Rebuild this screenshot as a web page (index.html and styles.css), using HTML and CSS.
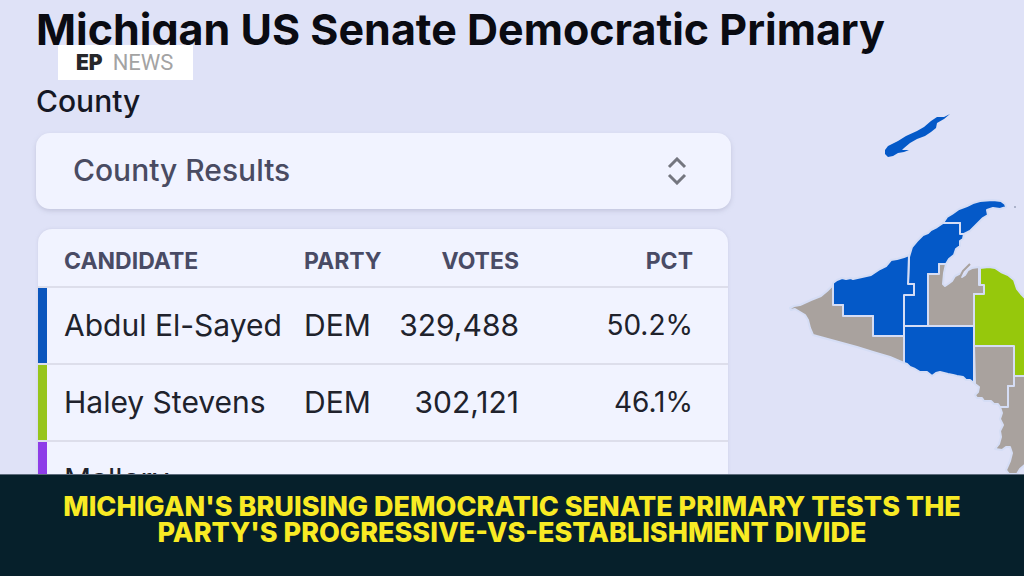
FILE: index.html
```html
<!DOCTYPE html>
<html lang="en">
<head>
<meta charset="utf-8">
<meta name="viewport" content="width=device-width, initial-scale=1">
<title>Michigan US Senate Democratic Primary</title>
<link rel="stylesheet" href="styles.css">
</head>
<body>
<main class="scene">
  <section class="results">
    <h1 class="title">Michigan US Senate Democratic Primary</h1>
    <label class="field-label" for="view">County</label>
    <div class="picker">
      <select class="picker-select" id="view"><option>County Results</option></select>
      <svg class="picker-icon" viewBox="0 0 20 28" aria-hidden="true"><path d="M2 10l8-8 8 8M2 18l8 8 8-8"/></svg>
    </div>
    <table class="table">
      <colgroup><col class="col-name"><col class="col-party"><col class="col-votes"><col class="col-pct"></colgroup>
      <thead>
        <tr><th>CANDIDATE</th><th>PARTY</th><th class="num">VOTES</th><th class="num">PCT</th></tr>
      </thead>
      <tbody>
        <tr class="row-blue"><td>Abdul El-Sayed</td><td>DEM</td><td class="num">329,488</td><td class="num">50.2%</td></tr>
        <tr class="row-green"><td>Haley Stevens</td><td>DEM</td><td class="num">302,121</td><td class="num">46.1%</td></tr>
        <tr class="row-purple"><td>Mallory</td><td></td><td></td><td></td></tr>
      </tbody>
    </table>
  </section>
  <svg class="map" viewBox="760 0 264 474" role="img" aria-label="County results map">
    <g class="lead-blue">
      <path class="island" d="M885 150L888 146L898 141L906 136L917 131L924 127L931 121L937 117L944 117L950 114L944 119L937 123L936 128L931 132L925 136L917 139L910 143L904 148L902 150L909 150L904 152L898 153L893 156L888 157L885 154Z"/>
      <path d="M943 223L947 217L952 214L959 209L967 206L973 203L980 201L993 200L1001 201L1005 204L1006 207L1000 209L993 208L987 210L988 215L983 218L980 221L975 226L970 231L964 234L960 234V223Z"/>
      <path d="M909 257L912 247L917 241L923 235L928 233L931 230L937 227L943 223H960V234H964L963 239L960 241V246L956 249L954 255L949 259L946 264H939V274H928V326H904V295H914V284H908Z"/>
      <path d="M833 283L837 280L842 278L846 279L851 278L853 279L862 277L871 275L880 269L886 266L891 260L897 259L904 257L909 255L908 284H914V295H904V336H873V316H843V305H833Z"/>
      <path d="M904 326H974V383L970 380L966 380L963 377L957 376L953 375L948 374L944 373L940 372L936 373L932 376L927 372L920 372L915 369L910 367L907 364L904 363Z"/>
    </g>
    <g class="lead-gray">
      <path d="M833 285L827 291L821 296L811 300L800 305L794 306L790 308L791 310L795 309L800 312L805 315L808 320L810 328L813 335L835 341L857 347L873 352L890 357L904 363V336H873V316H843V305H833Z"/>
      <path d="M928 274H939V264H946L944 273L943 284L945 286L948 284L952 281L955 276L961 273L962 277L965 275L968 270L972 268L979 267V285H984V294H974V326H928Z"/>
      <path d="M974 346H1014V386H1008V407H1000L998 404L994 404L991 401L984 401L982 398L977 398L975 395L978 392L979 387L975 384Z"/>
      <path d="M1014 376H1026V464L1020 469L1017 474H1009L1006 470L1010 461L1012 453L1010 447L1006 447L1002 450L995 449L999 444L1001 437L1000 431L1003 425L1000 419L1002 413L1000 407H1008V386H1014Z"/>
    </g>
    <path class="lead-green" d="M980 268L989 267L995 268L1001 272L1008 275L1014 280L1017 289L1021 294L1026 299V376H1014V346H974V294H984V285H980Z"/>
    <path class="inlet" d="M960 277L963 271L970 264"/>
    <circle class="speck" cx="1015" cy="207" r="1"/>
  </svg>
  <div class="badge"><strong class="badge-name">EP</strong><span class="badge-word">NEWS</span></div>
</main>
<footer class="banner">
  <h2 class="headline">MICHIGAN'S BRUISING DEMOCRATIC SENATE PRIMARY TESTS THE PARTY'S PROGRESSIVE-VS-ESTABLISHMENT DIVIDE</h2>
</footer>
</body>
</html>
```
FILE: styles.css
```css
* { box-sizing: border-box; }

body {
  margin: 0;
  height: 100vh;
  display: flex;
  flex-direction: column;
  font-family: Inter, "Liberation Sans", sans-serif;
  background: #dfe2f7;
}

.scene {
  position: relative;
  flex: 1;
  min-height: 0;
  overflow: hidden;
  display: grid;
  grid-template-columns: minmax(0, 1fr) 264px;
  align-items: start;
}

.results { padding: 4px 29px 0 36px; }

.title {
  margin: 0;
  font-size: 43px;
  line-height: 50px;
  font-weight: 700;
  color: #0a0b12;
  white-space: nowrap;
}

.field-label {
  display: block;
  margin: 30px 0 14px;
  font-size: 30px;
  line-height: 35px;
  font-weight: 500;
  color: #151724;
}

.picker { position: relative; }

.picker-select {
  display: block;
  width: 100%;
  height: 76px;
  padding: 0 37px 2px;
  appearance: none;
  border: 0;
  border-radius: 14px;
  background: #f1f3ff;
  box-shadow: 0 2px 4px #a9acc680;
  font: 500 30px/36px Inter, "Liberation Sans", sans-serif;
  color: #494b62;
}

.picker-icon {
  position: absolute;
  right: 44px;
  top: 24px;
  width: 20px;
  height: 28px;
  fill: none;
  stroke: #74767f;
  stroke-width: 3;
  pointer-events: none;
}

.table {
  width: calc(100% - 5px);
  margin: 20px 0 0 2px;
  table-layout: fixed;
  border-collapse: separate;
  border-spacing: 0;
  border-radius: 14px 14px 0 0;
  background: #f1f3ff;
  box-shadow: 0 0 3px #b9bcd680;
  overflow: hidden;
}

.col-name { width: 266px; }
.col-party { width: 90px; }
.col-votes { width: 125px; }

th, td {
  padding: 0;
  border-bottom: 2px solid #dddeeb;
  text-align: left;
  white-space: nowrap;
}

th {
  height: 59px;
  padding-top: 6px;
  font-size: 23px;
  line-height: 28px;
  font-weight: 700;
  color: #494b65;
}

td {
  height: 77px;
  padding-bottom: 2px;
  font-size: 30px;
  line-height: 36px;
  color: #20222c;
}

th:first-child, td:first-child { padding-left: 26px; }
.num { text-align: right; }
.num:last-child { padding-right: 35px; }
td.num:last-child { font-size: 28px; }

.row-blue td:first-child { background: linear-gradient(#0b56bd, #0b56bd) no-repeat 0 0 / 9px 100%; }
.row-green td:first-child { background: linear-gradient(#97c51c, #97c51c) no-repeat 0 0 / 9px 100%; }
.row-purple td:first-child { background: linear-gradient(#8e3de8, #8e3de8) no-repeat 0 0 / 9px 100%; }

.map {
  display: block;
  width: 100%;
  stroke: #d5ddf5;
  stroke-width: 2;
  stroke-linejoin: round;
}

.lead-blue { fill: #0459c8; }
.lead-gray { fill: #a9a29e; }
.lead-green { fill: #96c80c; }
.island { stroke: none; }
.inlet { fill: none; stroke: #a9a29e; }
.speck { fill: #9ba3bd; stroke: none; }

.badge {
  position: absolute;
  left: 58px;
  top: 45px;
  height: 35px;
  padding: 0 20px 0 18px;
  display: flex;
  align-items: center;
  gap: 10px;
  background: #fff;
  font-size: 22px;
  line-height: 35px;
}

.badge-name { font-weight: 900; font-size: 21px; color: #26272a; }
.badge-word { font-family: Roboto, sans-serif; color: #a3a3a3; }

.banner {
  flex: none;
  min-height: 102px;
  padding: 19px 40px 30px;
  background: #06202b;
  border-top: 1px solid #5d6b7c;
}

.headline {
  margin: 0;
  font-size: 27px;
  line-height: 26px;
  font-weight: 800;
  text-align: center;
  color: #f8ea24;
}
```
